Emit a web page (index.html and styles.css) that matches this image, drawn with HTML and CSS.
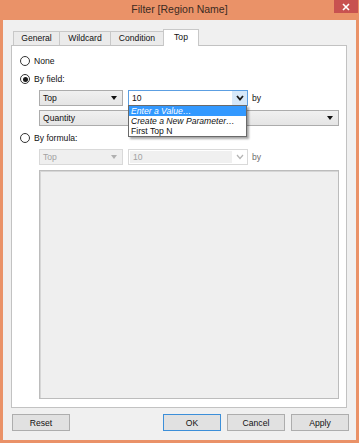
FILE: index.html
```html
<!DOCTYPE html>
<html lang="en">
<head>
    <meta charset="UTF-8">
    <meta name="viewport" content="width=device-width, initial-scale=1.0">
    <title>Filter [Region Name]</title>
    <link rel="stylesheet" href="styles.css">
</head>
<body>
    <div class="window">
        <div class="titlebar">
            <span></span>
            <span class="title">Filter [Region Name]</span>
            <button class="close">
                <svg width="8" height="8" viewBox="0 0 8 8"><path d="M1 1L7 7M7 1L1 7" stroke="#fff" stroke-width="1.6"/></svg>
            </button>
        </div>
        <div class="dialog">
            <div class="tabs">
                <div class="tab tab-general">General</div>
                <div class="tab tab-wildcard">Wildcard</div>
                <div class="tab tab-condition">Condition</div>
                <div class="tab tab-top active">Top</div>
            </div>
            <div class="panel">
                <div class="radio-row">
                    <span class="radio"></span>
                    <span>None</span>
                </div>
                <div class="radio-row gap">
                    <span class="radio checked"></span>
                    <span>By field:</span>
                </div>
                <div class="field-row">
                    <div class="select short">
                        <span>Top</span>
                        <span class="tri"></span>
                    </div>
                    <div class="combo focus">
                        <span class="combo-val">10</span>
                        <span class="combo-btn">
                            <svg width="8" height="6" viewBox="0 0 8 6"><path d="M1 1L4 4.5L7 1" fill="none" stroke="#1a1a1a" stroke-width="1.8"/></svg>
                        </span>
                        <ul class="dropdown">
                            <li class="hl">Enter a Value…</li>
                            <li class="em">Create a New Parameter…</li>
                            <li>First Top N</li>
                        </ul>
                    </div>
                    <span class="by">by</span>
                </div>
                <div class="field-row">
                    <div class="select wide">
                        <span>Quantity</span>
                        <span class="tri"></span>
                    </div>
                </div>
                <div class="radio-row formula">
                    <span class="radio"></span>
                    <span>By formula:</span>
                </div>
                <div class="field-row disabled">
                    <div class="select short">
                        <span>Top</span>
                        <span class="tri"></span>
                    </div>
                    <div class="combo">
                        <span class="combo-val">10</span>
                        <span class="combo-btn">
                            <svg width="8" height="6" viewBox="0 0 8 6"><path d="M1 1L4 4.5L7 1" fill="none" stroke="#b4b4b4" stroke-width="1.2"/></svg>
                        </span>
                    </div>
                    <span class="by">by</span>
                </div>
                <div class="formula-box"></div>
            </div>
            <div class="buttons">
                <button class="btn">Reset</button>
                <span class="spacer"></span>
                <button class="btn default">OK</button>
                <button class="btn">Cancel</button>
                <button class="btn">Apply</button>
            </div>
        </div>
    </div>
</body>
</html>
```

FILE: styles.css
```css
* {
    padding: 0;
    margin: 0;
    box-sizing: border-box;
}

body {
    width: 359px;
    height: 443px;
    background: #ea9268;
    font-family: "Liberation Sans", Arial, sans-serif;
    font-size: 8.6px;
    color: #111;
    overflow: hidden;
}

.window {
    width: 359px;
    height: 443px;
}

.titlebar {
    height: 20px;
    display: grid;
    grid-template-columns: 1fr auto 1fr;
}

.title {
    font-size: 10.5px;
    color: #3a2a22;
    line-height: 19px;
}

.close {
    justify-self: end;
    width: 24px;
    height: 13px;
    margin-right: 1px;
    border: none;
    background: #c85250;
    display: flex;
    align-items: center;
    justify-content: center;
}

.dialog {
    margin: 0 3px;
    height: 420px;
    background: #f0f0f0;
    padding: 9px 9px 0 8px;
}

/* tabs */
.tabs {
    display: flex;
    align-items: flex-end;
    height: 16px;
    padding-left: 2px;
}

.tab {
    height: 14px;
    border: 1px solid #c8c8c8;
    border-bottom: none;
    background: #ebebeb;
    text-align: center;
    line-height: 13px;
    margin-left: -1px;
}

.tab:first-child {
    margin-left: 0;
}

.tab-general { width: 47px; }
.tab-wildcard { width: 52px; }
.tab-condition { width: 54px; }
.tab-top { width: 36px; }

.tab.active {
    height: 17px;
    background: #fff;
    line-height: 15px;
    margin-bottom: -1px;
    position: relative;
    z-index: 1;
}

.panel {
    width: 336px;
    height: 363px;
    border: 1px solid #c2c2c2;
    background: #fff;
    padding: 8px 7px 8px 8px;
}

/* radios */
.radio-row {
    display: flex;
    align-items: center;
    gap: 4px;
    height: 14px;
}

.radio-row.gap {
    margin-top: 4px;
}

.radio-row.formula {
    margin-top: 5px;
}

.radio {
    width: 10px;
    height: 10px;
    border: 1px solid #333;
    border-radius: 50%;
    background: #fff;
    display: flex;
    align-items: center;
    justify-content: center;
}

.radio.checked::after {
    content: "";
    width: 5px;
    height: 5px;
    border-radius: 50%;
    background: #1a1a1a;
}

/* fields */
.field-row {
    display: flex;
    align-items: center;
    height: 16px;
    margin-top: 4px;
    margin-left: 19px;
}

.select {
    height: 16px;
    border: 1px solid #acacac;
    background: linear-gradient(#f0f0f0, #e5e5e5);
    display: flex;
    align-items: center;
    justify-content: space-between;
    padding: 0 5px 0 3px;
}

.select.short { width: 84px; }
.select.wide { width: 300px; }

.tri {
    width: 0;
    height: 0;
    border-left: 3.5px solid transparent;
    border-right: 3.5px solid transparent;
    border-top: 4px solid #111;
}

.combo {
    width: 120px;
    height: 16px;
    margin-left: 5px;
    border: 1px solid #d9d9d9;
    background: #fff;
    display: flex;
    position: relative;
}

.combo.focus {
    border-color: #5c9fe2;
}

.combo-val {
    flex: 1;
    padding-left: 3px;
    line-height: 14px;
}

.combo-btn {
    width: 15px;
    display: flex;
    align-items: center;
    justify-content: center;
}

.combo.focus .combo-btn {
    background: #d6e8f9;
}

.by {
    margin-left: 4px;
}

.dropdown {
    list-style: none;
    position: absolute;
    top: 100%;
    left: -1px;
    width: 119px;
    background: #fff;
    border: 1px solid #6a6a6a;
    box-shadow: 2px 2px 2px rgba(0, 0, 0, 0.35);
    z-index: 5;
}

.dropdown li {
    height: 10px;
    line-height: 10px;
    padding-left: 2px;
    white-space: nowrap;
}

.dropdown li.hl {
    background: #3399ff;
    color: #fff;
    font-style: italic;
}

.dropdown li.em {
    font-style: italic;
}

/* disabled */
.disabled {
    color: #a2a2a2;
}

.disabled .select {
    border-color: #d9d9d9;
    background: #efefef;
}

.disabled .tri {
    border-top-color: #b0b0b0;
}

.disabled .combo-val {
    background: #f0f0f0;
    margin: 1px 0 1px 1px;
    line-height: 12px;
}

.disabled .by {
    color: #6d6d6d;
}

.formula-box {
    width: 300px;
    height: 229px;
    margin: 5px 0 0 19px;
    background: #efefef;
    border: 1px solid #bcbcbc;
    box-shadow: inset 1px 1px 0 #d6d6d6;
}

/* buttons */
.buttons {
    display: flex;
    gap: 6px;
    margin: 6px -2px 0 1px;
}

.spacer {
    flex: 1;
}

.btn {
    width: 58px;
    height: 17px;
    border: 1px solid #adadad;
    background: #e1e1e1;
    font-family: inherit;
    font-size: 8.6px;
    color: #111;
}

.btn.default {
    border-color: #3c8fd9;
}
```
